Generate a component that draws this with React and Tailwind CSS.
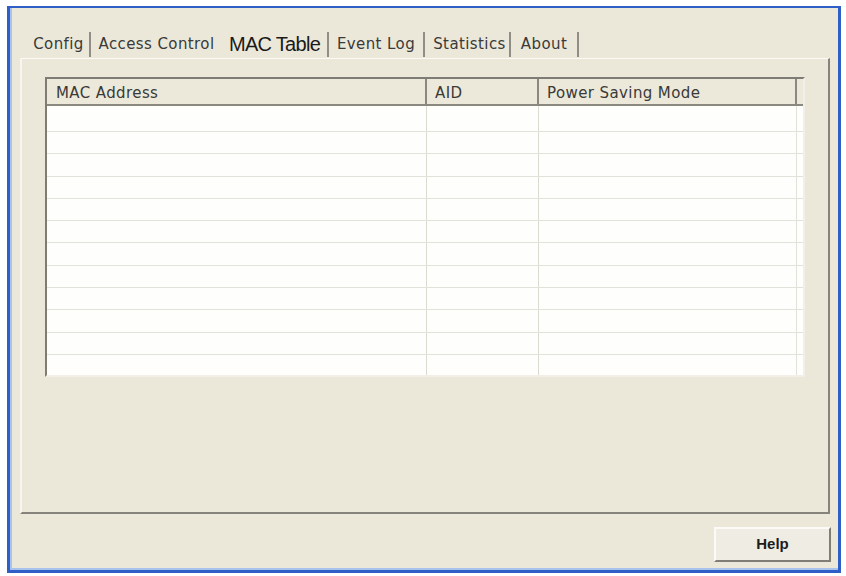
import React from 'react';

const ROWS = [26, 22.3, 22.3, 22.3, 22.3, 22.3, 22.3, 22.3, 22.3, 22.3, 22.3, 22];

function Sep() {
    return <div className="w-[2px] h-[25px] bg-[#8f8d85]" />;
}

function Tab({ w, children, className = '' }) {
    return (
        <div className={`h-full flex items-center justify-center ${className}`} style={{ width: w }}>
            {children}
        </div>
    );
}

export default function App() {
    const small = "text-[15px] text-[#3a3a38] tracking-[0.4px] font-['DejaVu_Sans',sans-serif]";
    return (
        <div className="w-[846px] h-[576px] bg-white pt-[6px] pl-[7px] overflow-hidden">
            {/* Window */}
            <div className="w-[834px] h-[567px] bg-[#ebe8d9] border-l-[3px] border-r-[3px] border-t-[2px] border-b-[3px] border-[#2f5ec6] shadow-[inset_2px_0_0_#a8c2ee,inset_0_-2px_0_#a8c2ee] flex flex-col">
                {/* Tabs */}
                <div className="mt-[20px] ml-[18px] h-[30px] flex items-center pt-[3px]">
                    <Tab w={61}><span className={small}>Config</span></Tab>
                    <Sep />
                    <Tab w={131}><span className={small}>Access Control</span></Tab>
                    <Tab w={105}>
                        <span className="text-[20px] tracking-[-0.7px] text-[#1a1a1a] font-['Liberation_Sans',Arial,sans-serif] -mt-[2px]">MAC Table</span>
                    </Tab>
                    <Sep />
                    <Tab w={94}><span className={small}>Event Log</span></Tab>
                    <Sep />
                    <Tab w={84} className="pl-[5px]"><span className={small}>Statistics</span></Tab>
                    <Sep />
                    <Tab w={66}><span className={small}>About</span></Tab>
                    <Sep />
                </div>

                {/* Tab panel */}
                <div className="ml-[10px] w-[810px] h-[456px] border-t border-l-2 border-r-2 border-b-2 border-t-[#fbfaf4] border-l-[#f7f5ee] border-r-[#85837b] border-b-[#85837b] pl-[23px] pt-[18px]">
                    {/* List view */}
                    <div className="w-[760px] h-[300px] bg-[#fefefc] border-l-2 border-t-2 border-l-[#7e7c74] border-t-[#7e7c74] border-r-2 border-b-2 border-r-[#f1efe7] border-b-[#f1efe7] flex flex-col">
                        <div className="h-[27px] shrink-0 flex bg-[#ece9da] border-b-2 border-[#8a887f] text-[15px] text-[#3a3a38] tracking-[0.4px] font-['DejaVu_Sans',sans-serif]">
                            <div className="w-[380px] flex items-center pl-[9px] pt-[3px] border-r-2 border-[#8a887f]">MAC Address</div>
                            <div className="w-[112px] flex items-center pl-[8px] pt-[3px] border-r-2 border-[#8a887f]">AID</div>
                            <div className="w-[258px] flex items-center pl-[8px] pt-[3px] border-r-2 border-[#8a887f]">Power Saving Mode</div>
                            <div className="flex-1" />
                        </div>
                        <div className="flex-1 overflow-hidden">
                            {ROWS.map((h, i) => (
                                <div
                                    key={i}
                                    className={`flex ${i < ROWS.length - 1 ? 'border-b border-[#e3e2da]' : ''}`}
                                    style={{ height: h }}
                                >
                                    <div className="w-[380px] border-r border-[#dcdbd2]" />
                                    <div className="w-[112px] border-r border-[#dcdbd2]" />
                                    <div className="w-[258px] border-r border-[#e3e2da]" />
                                    <div className="flex-1" />
                                </div>
                            ))}
                        </div>
                    </div>
                </div>

                {/* Footer */}
                <div className="flex justify-end pt-[13px] pr-[7px]">
                    <button className="w-[117px] h-[35px] bg-[#efede3] border-l-2 border-t-2 border-l-[#fbfaf6] border-t-[#fbfaf6] border-r-2 border-b-2 border-r-[#7f7d75] border-b-[#7f7d75] flex items-center justify-center text-[15px] font-bold text-[#1c1c1c] font-['Liberation_Sans',Arial,sans-serif]">
                        Help
                    </button>
                </div>
            </div>
        </div>
    );
}
